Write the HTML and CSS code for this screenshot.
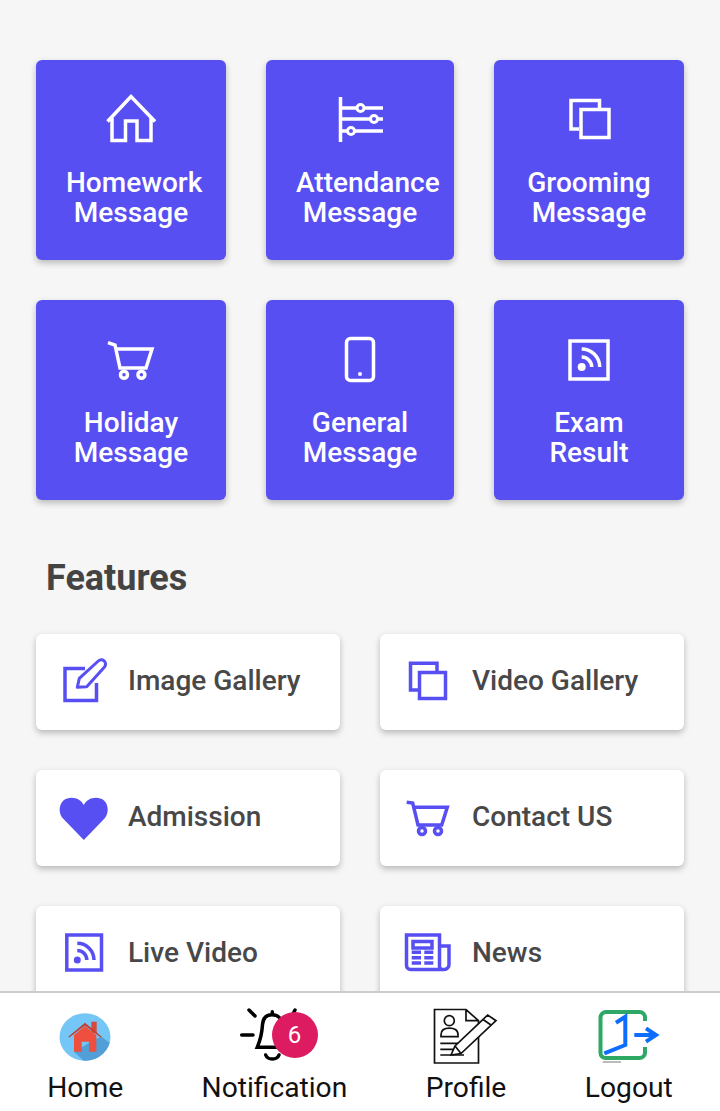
FILE: index.html
```html
<!DOCTYPE html>
<html lang="en">
<head>
    <meta charset="UTF-8">
    <meta name="viewport" content="width=device-width, initial-scale=1.0">
    <title>School App</title>
    <link rel="stylesheet" href="styles.css">
</head>
<body>
    <main class="content">
        <section class="tiles">
            <a class="tile">
                <svg class="tile-icon" viewBox="0 0 60 60">
                    <path d="M6.500 31.500L30 6.500l24 25M11 28v22.500h13.500V31H36v19.500h14V28"/>
                </svg>
                <span class="tile-text">Homework Message</span>
            </a>
            <a class="tile">
                <svg class="tile-icon" viewBox="0 0 60 60">
                    <path d="M10.500 7v45M10 18h43M10 29h43M10 41h43"/>
                    <circle class="knob" cx="30.500" cy="18" r="3.500"/>
                    <circle class="knob" cx="44" cy="29" r="3.500"/>
                    <circle class="knob" cx="21" cy="41" r="3.500"/>
                </svg>
                <span class="tile-text">Attendance Message</span>
            </a>
            <a class="tile">
                <svg class="tile-icon" viewBox="0 0 60 60">
                    <rect x="22" y="19.500" width="28" height="28"/>
                    <path d="M40.500 18v-7.500H12V39h8"/>
                </svg>
                <span class="tile-text">Grooming Message</span>
            </a>
            <a class="tile">
                <svg class="tile-icon" viewBox="0 0 60 60">
                    <path d="M7 12.700l7 2.300 5 23h26l6-19H15"/>
                    <circle cx="23" cy="44.700" r="3.500"/>
                    <circle cx="40.400" cy="44.700" r="3.500"/>
                </svg>
                <span class="tile-text">Holiday Message</span>
            </a>
            <a class="tile">
                <svg class="tile-icon" viewBox="0 0 60 60">
                    <rect x="16.500" y="8.500" width="27" height="42" rx="4"/>
                    <circle class="dot" cx="30" cy="44" r="2"/>
                </svg>
                <span class="tile-text">General Message</span>
            </a>
            <a class="tile">
                <svg class="tile-icon" viewBox="0 0 60 60">
                    <rect x="11" y="11" width="38" height="38"/>
                    <path d="M22.700 27a10 10 0 0 1 10 10M22.700 19a18 18 0 0 1 18 18"/>
                    <circle class="dot" cx="22.700" cy="37" r="4"/>
                </svg>
                <span class="tile-text">Exam Result</span>
            </a>
        </section>

        <h2 class="section-title">Features</h2>

        <section class="features">
            <a class="feature">
                <svg class="feature-icon" viewBox="0 0 56 48">
                    <path d="M29 10.500H9v32h31.500V25"/>
                    <path class="pen" d="M21.300 29.300l2-9L42.300 3a4.300 4.300 0 0 1 6.400 5.700L30.700 28.700z"/>
                </svg>
                <span class="feature-text">Image Gallery</span>
            </a>
            <a class="feature">
                <svg class="feature-icon" viewBox="0 0 56 48">
                    <rect x="19.500" y="14.500" width="26" height="26"/>
                    <path d="M37 14V5.200H10.500V32H18"/>
                </svg>
                <span class="feature-text">Video Gallery</span>
            </a>
            <a class="feature">
                <svg class="feature-icon" viewBox="0 0 56 48">
                    <path class="dot" d="M27.800 46L7 24.500C1 18 3 3.700 15.500 3.700c5.500 0 10 2.800 12.300 7.300C30 6.500 34.500 3.700 40 3.700c12.500 0 14.500 14.300 8.500 20.800z"/>
                </svg>
                <span class="feature-text">Admission</span>
            </a>
            <a class="feature">
                <svg class="feature-icon" viewBox="0 0 56 48">
                    <path d="M6.700 8.300l6 .7L18 31h23.700l5.600-17.700h-33"/>
                    <circle cx="22" cy="37" r="3.500"/>
                    <circle cx="38" cy="37" r="3.500"/>
                </svg>
                <span class="feature-text">Contact US</span>
            </a>
            <a class="feature">
                <svg class="feature-icon" viewBox="0 0 56 48">
                    <rect x="10.800" y="5" width="34.700" height="35"/>
                    <path d="M21.300 20.500a9.500 9.500 0 0 1 9.500 9.500M21.300 13.300A16.700 16.700 0 0 1 38 30"/>
                    <circle class="dot" cx="21.300" cy="30" r="3.500"/>
                </svg>
                <span class="feature-text">Live Video</span>
            </a>
            <a class="feature">
                <svg class="feature-icon" viewBox="0 0 56 48">
                    <path d="M6.500 5h33v31a3 3 0 0 0 3 3.500h-32a4 4 0 0 1-4-4zM39.500 16H49v18a5 5 0 0 1-5 5.500h-1.500"/>
                    <rect x="13" y="11.500" width="19" height="6.500"/>
                    <path d="M11.700 22.300H21M24.300 22.300h9M11.700 27.700H21M24.300 27.700h9M11.700 33H21M24.300 33h9"/>
                </svg>
                <span class="feature-text">News</span>
            </a>
        </section>
    </main>

    <nav class="bottom-nav">
        <a class="nav-item">
            <svg class="nav-icon" width="52" height="60" viewBox="0 -5 52 60">
                <defs>
                    <clipPath id="homeClip"><ellipse cx="26" cy="26" rx="25.500" ry="23.700"/></clipPath>
                </defs>
                <ellipse cx="26" cy="26" rx="25.500" ry="23.700" fill="#74c6f6"/>
                <path clip-path="url(#homeClip)" d="M15 40.700L27 52h25V33l-9.300-7.300-5.400 2z" fill="#519fd6"/>
                <path d="M32.300 10.700h5.400V22h-5.400z" fill="#d9483a"/>
                <path d="M26 11.700L9.300 25.700l1 .8L26 14.500l15.700 12 1-.8z" fill="#c13d2f"/>
                <path d="M15 24l11-9 11.300 9v16.700H30v-10h-7.300v10H15z" fill="#ee4f3e"/>
            </svg>
            <span>Home</span>
        </a>
        <a class="nav-item">
            <svg class="nav-icon" width="70" height="60" viewBox="0 -2 70 60">
                <path class="bell" d="M10 2l6 6M2.700 27H14M56 2l-2 4M33.300 3.700v3M33 6.700c-6 0-9 4-9.500 10-.5 8-2 15-5.200 22.600H48c-3-7-4.800-15-5-22.600-.3-6-4-10-10-10zM26.700 47c2 5.300 11.300 5.300 13.300 0"/>
            </svg>
            <span class="badge">6</span>
            <span>Notification</span>
        </a>
        <a class="nav-item">
            <svg class="nav-icon" width="70" height="60" viewBox="0 0 70 60">
                <g class="line-art">
                    <path d="M35 3.500H3.500V57h44V14.700zM35 3.500v11.200h12.500"/>
                    <circle cx="18.300" cy="14.700" r="5"/>
                    <path d="M10 30.700v-2c0-5 4-6.500 8.500-6.500s8.500 1.500 8.500 6.500v2zM9.300 37.300H33M9.300 43.300H33M9.300 49H33"/>
                    <path class="pencil" d="M20 49l4-9L56.700 9 65 14.700 30 47.500z"/>
                    <path d="M24 40l6 7.500M52 13.500l8 5.500"/>
                </g>
            </svg>
            <span>Profile</span>
        </a>
        <a class="nav-item">
            <svg class="nav-icon" width="64" height="60" viewBox="0 -2 64 60">
                <path d="M48 13V9.500A5.500 5.500 0 0 0 42.500 4H9a5.500 5.500 0 0 0-5.500 5.500V45A5 5 0 0 0 9 50h33.500a5.500 5.500 0 0 0 5.500-5v-6" fill="none" stroke="#2fa866" stroke-width="4"/>
                <path d="M19 14.700l9.300-6V37L7.300 45.300M37.300 27h20M49 20.300L59 27l-10 6.700" fill="none" stroke="#0d6efd" stroke-width="4"/>
                <path d="M5.700 54H24" fill="none" stroke="#777" stroke-width="1"/>
            </svg>
            <span>Logout</span>
        </a>
    </nav>
</body>
</html>
```

FILE: styles.css
```css
* {
	box-sizing: border-box;
}

body {
	font-family: Roboto, "Liberation Sans", sans-serif;
	margin: 0;
	height: 100vh;
	display: flex;
	flex-direction: column;
	overflow: hidden;
	background-color: #f6f6f6;
}

.content {
	flex: 1;
	min-height: 0;
	overflow: hidden;
	padding: 60px 36px 0;
}

.tiles {
	display: grid;
	grid-template-columns: 190px 188px 190px;
	gap: 40px;
}

.tile {
	height: 200px;
	padding: 30px 30px 0;
	display: flex;
	flex-direction: column;
	background-color: #584ff3;
	border-radius: 6px;
	box-shadow: 0 3px 6px rgba(0, 0, 0, 0.25);
	color: #fff;
}

.tile-icon {
	width: 60px;
	height: 60px;
	margin: 0 auto 18px;
	flex: none;
	overflow: visible;
	fill: none;
	stroke: #fff;
	stroke-width: 3.5;
}

.tile-icon .knob {
	fill: #584ff3;
	stroke-width: 3;
}

.tile-icon .dot {
	fill: #fff;
	stroke: none;
}

.tile-text {
	font-size: 28px;
	font-weight: 500;
	line-height: 30px;
	text-align: center;
}

.section-title {
	margin: 55px 0 33px 10px;
	font-size: 36px;
	line-height: 46px;
	font-weight: 700;
	color: #444;
}

.features {
	display: grid;
	grid-template-columns: repeat(2, minmax(0, 1fr));
	gap: 40px;
}

.feature {
	height: 96px;
	padding-left: 20px;
	display: flex;
	align-items: center;
	gap: 16px;
	background-color: #fff;
	border-radius: 6px;
	box-shadow: 0 3px 6px rgba(0, 0, 0, 0.25);
	font-size: 28px;
	font-weight: 500;
	color: #484848;
}

.feature-text {
	margin-bottom: 3px;
}

.feature-icon {
	width: 56px;
	height: 48px;
	flex: none;
	overflow: visible;
	fill: none;
	stroke: #584ff3;
	stroke-width: 3.5;
}

.feature-icon .dot {
	fill: #584ff3;
	stroke: none;
}

.feature-icon .pen {
	stroke-width: 3;
	stroke-linejoin: round;
}

.bottom-nav {
	height: 120px;
	flex: none;
	padding: 13px 8px 0;
	display: flex;
	justify-content: space-around;
	align-items: flex-start;
	background-color: #fff;
	border-top: 2px solid #ccc;
}

.nav-item {
	position: relative;
	display: flex;
	flex-direction: column;
	align-items: center;
	font-size: 28.2px;
	line-height: 44px;
	color: #111;
}

.nav-icon {
	display: block;
}

.bell {
	fill: none;
	stroke: #000;
	stroke-width: 3.5;
	stroke-linecap: round;
}

.line-art {
	fill: none;
	stroke: #111;
	stroke-width: 1.7;
}

.line-art .pencil {
	fill: #fff;
}

.badge {
	position: absolute;
	left: 70px;
	top: 6px;
	width: 46px;
	height: 46px;
	border-radius: 50%;
	background-color: #dd1b60;
	color: #fff;
	font-size: 24px;
	line-height: 46px;
	text-align: center;
}
```
